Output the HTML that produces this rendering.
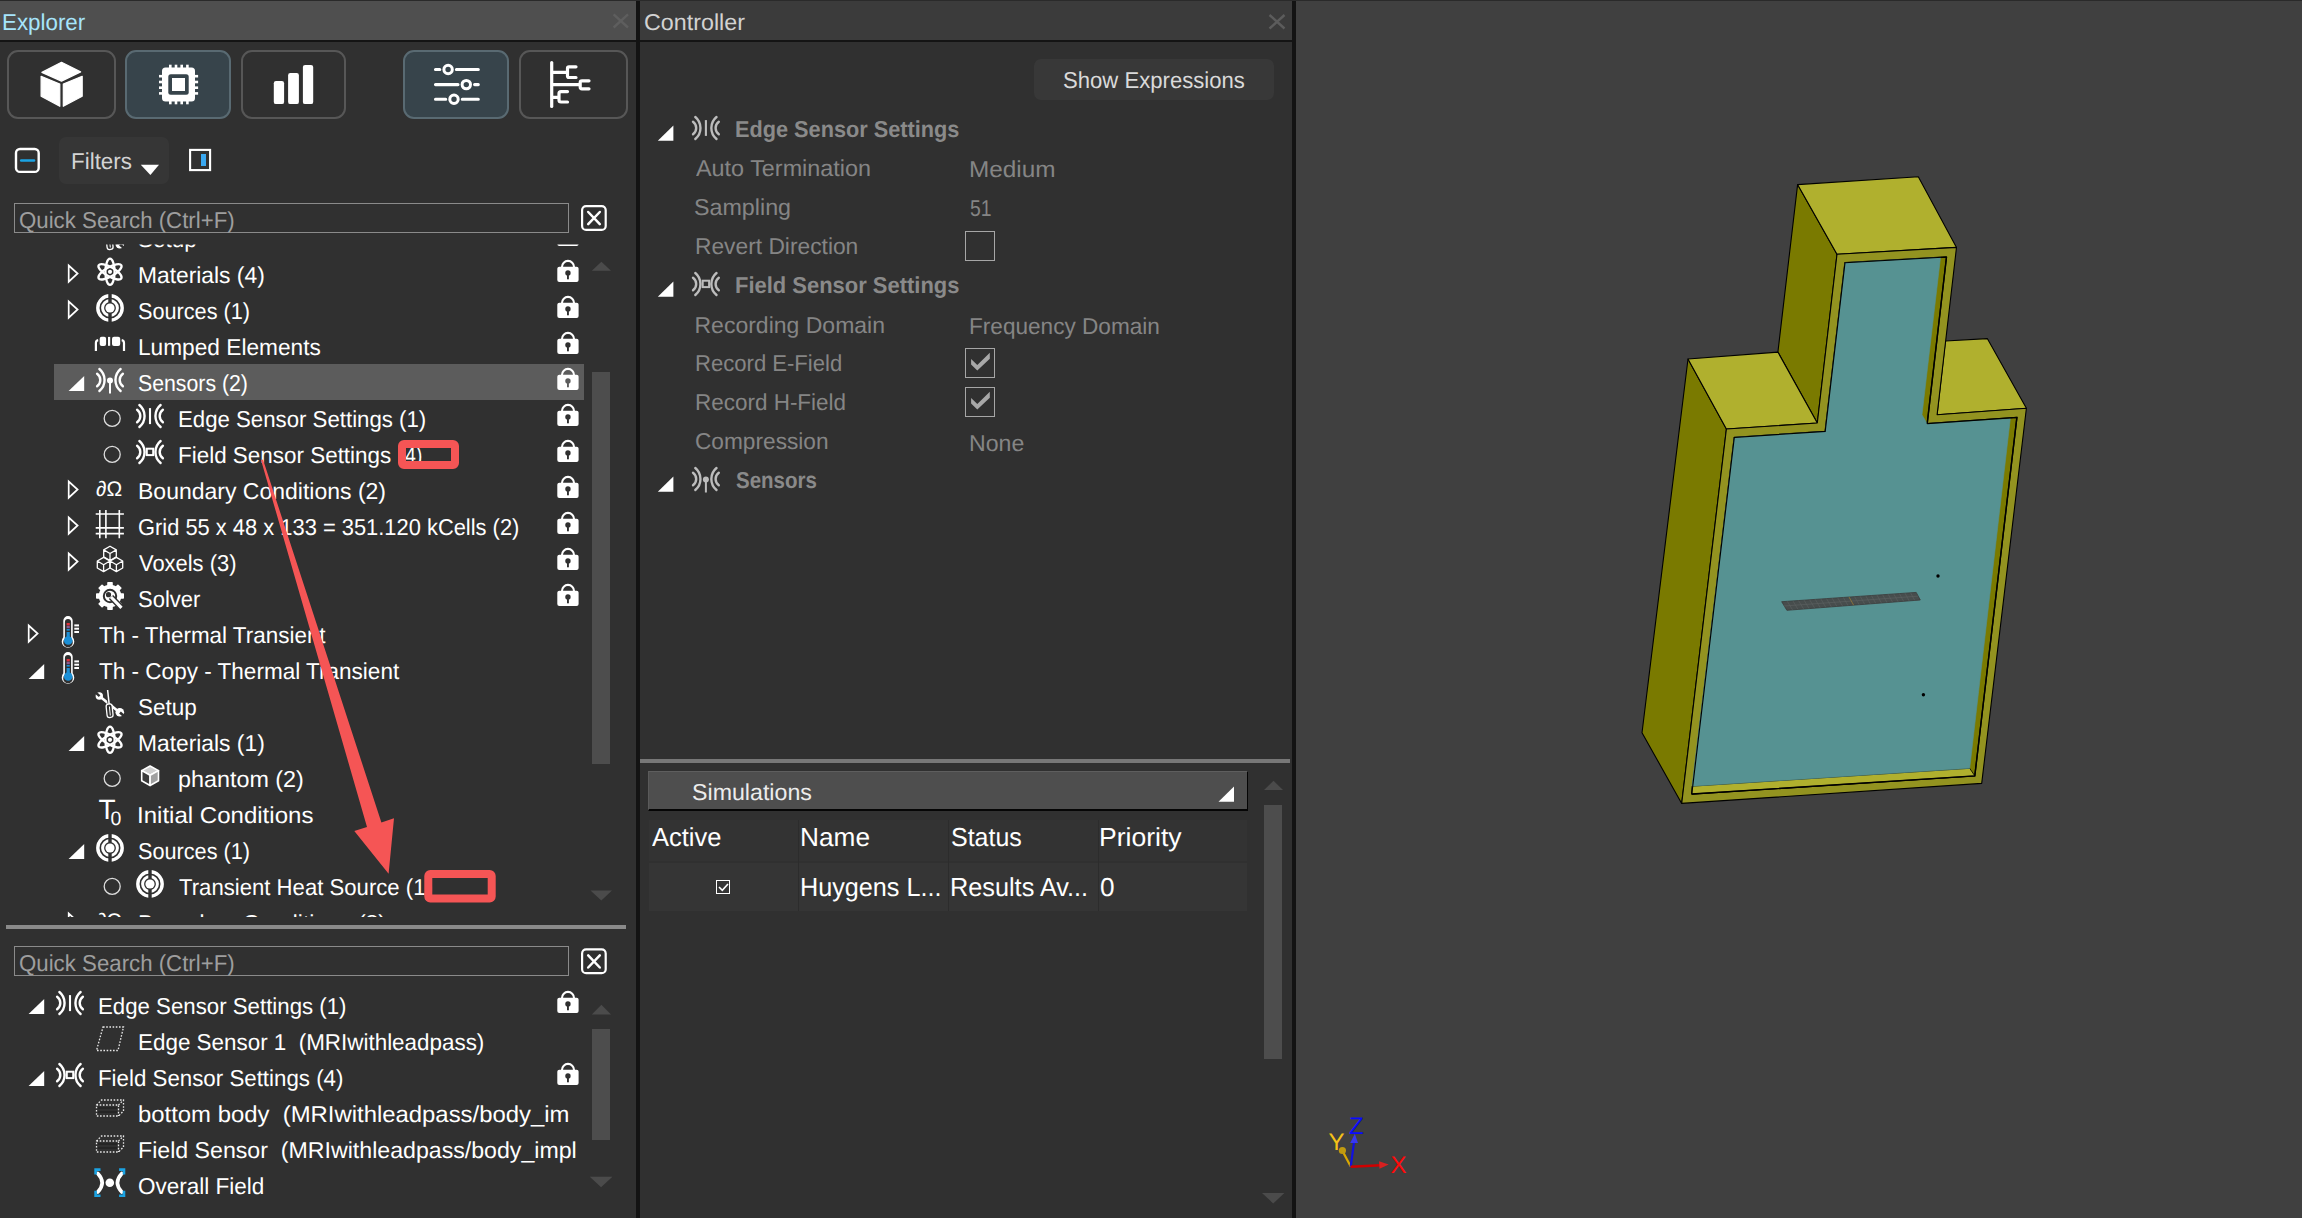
<!DOCTYPE html>
<html><head><meta charset="utf-8"><style>
html,body{margin:0;padding:0;width:2302px;height:1218px;overflow:hidden;background:#303030;}
body{position:relative;font-family:'Liberation Sans', sans-serif;}
.a{position:absolute;box-sizing:border-box;}
.t{position:absolute;white-space:pre;line-height:0;transform-origin:0 0;font-family:'Liberation Sans', sans-serif;text-rendering:geometricPrecision;}
svg{position:absolute;overflow:visible;}
</style></head><body>
<!-- top strip -->
<div class="a" style="left:0;top:0;width:2302px;height:1px;background:#2a2a2a"></div>
<!-- Explorer title -->
<div class="a" style="left:0;top:1px;width:636px;height:39px;background:#4f4f4f"></div>
<div class="a" style="left:0;top:40px;width:636px;height:2px;background:#141414"></div>
<!-- divider -->
<div class="a" style="left:636px;top:1px;width:4px;height:1217px;background:#131313"></div>
<!-- Controller title -->
<div class="a" style="left:640px;top:1px;width:652px;height:39px;background:#3b3b3b"></div>
<div class="a" style="left:640px;top:40px;width:652px;height:2px;background:#141414"></div>
<div class="a" style="left:1292px;top:1px;width:4px;height:1217px;background:#131313"></div>
<!-- viewport -->
<div class="a" style="left:1296px;top:1px;width:1006px;height:1217px;background:#404040"></div>
<!-- toolbar buttons -->
<div class="a" style="left:7px;top:50px;width:109px;height:69px;border:2px solid #575757;border-radius:11px;"></div>
<div class="a" style="left:125px;top:50px;width:106px;height:69px;border:2px solid #596a72;border-radius:11px;background:#37444b"></div>
<div class="a" style="left:241px;top:50px;width:105px;height:69px;border:2px solid #575757;border-radius:11px;"></div>
<div class="a" style="left:403px;top:50px;width:106px;height:69px;border:2px solid #596a72;border-radius:11px;background:#37444b"></div>
<div class="a" style="left:519px;top:50px;width:109px;height:69px;border:2px solid #575757;border-radius:11px;"></div>
<!-- filters row -->
<div class="a" style="left:59px;top:137px;width:110px;height:47px;background:#363636;border-radius:7px"></div>
<!-- search boxes -->
<div class="a" style="left:14px;top:203px;width:555px;height:30px;border:1px solid #8a8a8a;"></div>
<div class="a" style="left:14px;top:946px;width:555px;height:30px;border:1px solid #8a8a8a;"></div>
<!-- selection highlight -->
<div class="a" style="left:54px;top:364px;width:530px;height:36px;background:#5c5c5c"></div>
<!-- tree scrollbars -->
<div class="a" style="left:592px;top:372px;width:18px;height:392px;background:#4d4d4d"></div>
<div class="a" style="left:592px;top:1029px;width:18px;height:111px;background:#4d4d4d"></div>
<!-- splitter -->
<div class="a" style="left:6px;top:925px;width:620px;height:4px;background:#8a8a8a"></div>
<!-- Show Expressions -->
<div class="a" style="left:1034px;top:59px;width:240px;height:41px;background:#383838;border-radius:7px"></div>
<!-- controller checkboxes -->
<div class="a" style="left:965px;top:231px;width:30px;height:30px;border:1.3px solid #a6a6a6;"></div>
<div class="a" style="left:965px;top:348px;width:30px;height:30px;border:1.3px solid #a6a6a6;"></div>
<div class="a" style="left:965px;top:387px;width:30px;height:30px;border:1.3px solid #a6a6a6;"></div>
<!-- splitter ctrl -->
<div class="a" style="left:640px;top:759px;width:650px;height:4px;background:#777"></div>
<!-- simulations header -->
<div class="a" style="left:648px;top:771px;width:600px;height:40px;background:#4e4e4e;border-top:1px solid #5e5e5e;border-left:1px solid #5a5a5a;border-bottom:2px solid #050505;border-right:1px solid #050505"></div>
<div class="a" style="left:649px;top:820px;width:598px;height:41px;background:#333"></div>
<div class="a" style="left:649px;top:863px;width:598px;height:48px;background:#353535"></div>
<div class="a" style="left:798px;top:820px;width:1px;height:91px;background:#2c2c2c"></div>
<div class="a" style="left:948px;top:820px;width:1px;height:91px;background:#2c2c2c"></div>
<div class="a" style="left:1098px;top:820px;width:1px;height:91px;background:#2c2c2c"></div>
<div class="a" style="left:716px;top:880px;width:14px;height:14px;border:1px solid #fff;"></div>
<!-- sim scrollbar -->
<div class="a" style="left:1264px;top:805px;width:18px;height:254px;background:#4d4d4d"></div>

<div class="a" id="tree1" style="left:0;top:0;width:590px;height:1218px;clip-path:inset(244.5px 0 301px 0);"><div class="a" style="left:0;top:0;width:590px;height:1218px;">
<div class="t" style="left:138.02px;top:238.95px;font-size:23px;color:#fff;transform:scaleX(0.9775);">Setup</div><div class="t" style="left:138.01px;top:274.95px;font-size:23px;color:#fff;transform:scaleX(0.9917);">Materials (4)</div><div class="t" style="left:138.06px;top:310.95px;font-size:23px;color:#fff;transform:scaleX(0.9419);">Sources (1)</div><div class="t" style="left:138.01px;top:346.95px;font-size:23px;color:#fff;transform:scaleX(0.9860);">Lumped Elements</div><div class="t" style="left:138.08px;top:382.95px;font-size:23px;color:#fff;transform:scaleX(0.9248);">Sensors (2)</div><div class="t" style="left:177.83px;top:418.95px;font-size:23px;color:#fff;transform:scaleX(0.9659);">Edge Sensor Settings (1)</div><div class="t" style="left:177.82px;top:454.95px;font-size:23px;color:#fff;transform:scaleX(0.9755);">Field Sensor Settings</div><div class="t" style="left:138.00px;top:490.95px;font-size:23px;color:#fff;">Boundary Conditions (2)</div><div class="t" style="left:138.05px;top:526.95px;font-size:23px;color:#fff;transform:scaleX(0.9515);">Grid 55 x 48 x 133 = 351.120 kCells (2)</div><div class="t" style="left:139.00px;top:562.95px;font-size:23px;color:#fff;transform:scaleX(0.9527);">Voxels (3)</div><div class="t" style="left:138.04px;top:598.95px;font-size:23px;color:#fff;transform:scaleX(0.9561);">Solver</div><div class="t" style="left:98.70px;top:634.95px;font-size:23px;color:#fff;transform:scaleX(0.9758);">Th - Thermal Transient</div><div class="t" style="left:98.70px;top:670.95px;font-size:23px;color:#fff;transform:scaleX(0.9799);">Th - Copy - Thermal Transient</div><div class="t" style="left:138.02px;top:706.95px;font-size:23px;color:#fff;transform:scaleX(0.9775);">Setup</div><div class="t" style="left:138.01px;top:742.95px;font-size:23px;color:#fff;transform:scaleX(0.9917);">Materials (1)</div><div class="t" style="left:177.78px;top:778.95px;font-size:23px;color:#fff;transform:scaleX(1.0151);">phantom (2)</div><div class="t" style="left:136.91px;top:814.95px;font-size:23px;color:#fff;transform:scaleX(1.0453);">Initial Conditions</div><div class="t" style="left:138.06px;top:850.95px;font-size:23px;color:#fff;transform:scaleX(0.9419);">Sources (1)</div><div class="t" style="left:178.80px;top:886.95px;font-size:23px;color:#fff;transform:scaleX(0.9624);">Transient Heat Source (1)</div><div class="t" style="left:138.00px;top:922.95px;font-size:23px;color:#fff;">Boundary Conditions (2)</div><div class="t" style="left:398.67px;top:454.95px;font-size:23px;color:#fff;transform:scaleX(0.8280);">(4)</div>
</div></div>
<div class="a" id="tree2" style="left:0;top:980px;width:578px;height:238px;overflow:hidden;"><div class="a" style="left:0;top:-980px;width:590px;height:1218px;">
<div class="t" style="left:97.73px;top:1005.95px;font-size:23px;color:#fff;transform:scaleX(0.9670);">Edge Sensor Settings (1)</div><div class="t" style="left:138.03px;top:1041.95px;font-size:23px;color:#fff;transform:scaleX(0.9745);">Edge Sensor 1  (MRIwithleadpass)</div><div class="t" style="left:97.73px;top:1077.95px;font-size:23px;color:#fff;transform:scaleX(0.9696);">Field Sensor Settings (4)</div><div class="t" style="left:137.96px;top:1113.95px;font-size:23px;color:#fff;transform:scaleX(1.0384);">bottom body  (MRIwithleadpass/body_im</div><div class="t" style="left:137.99px;top:1149.95px;font-size:23px;color:#fff;transform:scaleX(1.0065);">Field Sensor  (MRIwithleadpass/body_impl</div><div class="t" style="left:138.02px;top:1185.95px;font-size:23px;color:#fff;transform:scaleX(0.9788);">Overall Field</div>
</div></div>
<div class="t" style="left:2.43px;top:21.95px;font-size:23px;color:#a6e4fb;transform:scaleX(0.9719);">Explorer</div><div class="t" style="left:643.69px;top:21.95px;font-size:23px;color:#d2d2d2;transform:scaleX(1.0127);">Controller</div><div class="t" style="left:70.73px;top:160.65px;font-size:23px;color:#d4d4d4;transform:scaleX(0.9737);">Filters</div><div class="t" style="left:19.33px;top:220.45px;font-size:23px;color:#9e9e9e;transform:scaleX(0.9672);">Quick Search (Ctrl+F)</div><div class="t" style="left:19.33px;top:963.45px;font-size:23px;color:#9e9e9e;transform:scaleX(0.9672);">Quick Search (Ctrl+F)</div><div class="t" style="left:1062.64px;top:79.85px;font-size:23px;color:#dadada;transform:scaleX(0.9611);">Show Expressions</div><div class="t" style="left:735.26px;top:128.75px;font-size:23px;color:#8a8a8a;font-weight:bold;transform:scaleX(0.9439);">Edge Sensor Settings</div><div class="t" style="left:695.50px;top:167.95px;font-size:23px;color:#858585;transform:scaleX(1.0163);">Auto Termination</div><div class="t" style="left:968.94px;top:169.45px;font-size:23px;color:#858585;transform:scaleX(1.0585);">Medium</div><div class="t" style="left:694.49px;top:207.35px;font-size:23px;color:#858585;transform:scaleX(1.0118);">Sampling</div><div class="t" style="left:970.00px;top:208.45px;font-size:23px;color:#858585;transform:scaleX(0.8430);">51</div><div class="t" style="left:694.51px;top:245.95px;font-size:23px;color:#858585;transform:scaleX(0.9902);">Revert Direction</div><div class="t" style="left:735.25px;top:284.95px;font-size:23px;color:#8a8a8a;font-weight:bold;transform:scaleX(0.9543);">Field Sensor Settings</div><div class="t" style="left:694.50px;top:324.95px;font-size:23px;color:#858585;">Recording Domain</div><div class="t" style="left:969.02px;top:326.35px;font-size:23px;color:#858585;transform:scaleX(0.9822);">Frequency Domain</div><div class="t" style="left:694.54px;top:362.95px;font-size:23px;color:#858585;transform:scaleX(0.9598);">Record E-Field</div><div class="t" style="left:694.52px;top:401.95px;font-size:23px;color:#858585;transform:scaleX(0.9767);">Record H-Field</div><div class="t" style="left:694.51px;top:441.35px;font-size:23px;color:#858585;transform:scaleX(0.9858);">Compression</div><div class="t" style="left:968.99px;top:442.75px;font-size:23px;color:#858585;transform:scaleX(1.0058);">None</div><div class="t" style="left:736.20px;top:479.95px;font-size:23px;color:#8a8a8a;font-weight:bold;transform:scaleX(0.8903);">Sensors</div><div class="t" style="left:691.59px;top:791.95px;font-size:23px;color:#ececec;transform:scaleX(1.0086);">Simulations</div><div class="t" style="left:651.80px;top:836.90px;font-size:26px;color:#fff;transform:scaleX(0.9809);">Active</div><div class="t" style="left:799.68px;top:836.90px;font-size:26px;color:#fff;transform:scaleX(1.0091);">Name</div><div class="t" style="left:950.64px;top:836.90px;font-size:26px;color:#fff;transform:scaleX(0.9600);">Status</div><div class="t" style="left:1099.46px;top:836.90px;font-size:26px;color:#fff;transform:scaleX(1.0216);">Priority</div><div class="t" style="left:799.76px;top:886.90px;font-size:26px;color:#fff;transform:scaleX(0.9693);">Huygens L...</div><div class="t" style="left:949.66px;top:886.90px;font-size:26px;color:#fff;transform:scaleX(0.9719);">Results Av...</div><div class="t" style="left:1100.49px;top:886.90px;font-size:26px;color:#fff;transform:scaleX(1.0077);">0</div>
<svg style="left:0;top:0" width="2302" height="1218" viewBox="0 0 2302 1218">
<defs>
<clipPath id="c1"><rect x="0" y="244.5" width="590" height="672.5"/></clipPath>
<clipPath id="c2"><rect x="0" y="980" width="590" height="238"/></clipPath>
<path id="trio" d="M1,2 L1,18.2 L9.9,10 Z" fill="none" stroke="#ffffff" stroke-width="1.7" stroke-linejoin="miter"/>
<path id="trif" d="M0,15.2 L15.6,15.2 L15.6,0 Z" fill="#ffffff"/>
<g id="lock"><rect x="0" y="10.7" width="21.3" height="15.2" rx="2" fill="#ffffff"/><path d="M4.7,11.5 L4.7,10.9 A6,6 0 0 1 16.7,10.9 L16.7,11.5" fill="none" stroke="#ffffff" stroke-width="2.1"/><circle cx="10.65" cy="16.9" r="2.7" fill="#303030"/><rect x="9.7" y="17" width="1.9" height="6.3" fill="#303030"/></g>
<g id="lockh"><rect x="0" y="10.7" width="21.3" height="15.2" rx="2" fill="#ffffff"/><path d="M4.7,11.5 L4.7,10.9 A6,6 0 0 1 16.7,10.9 L16.7,11.5" fill="none" stroke="#ffffff" stroke-width="2.1"/><circle cx="10.65" cy="16.9" r="2.7" fill="#5c5c5c"/><rect x="9.7" y="17" width="1.9" height="6.3" fill="#5c5c5c"/></g>
<circle id="radio" cx="0" cy="0" r="8" fill="none" stroke="#dcdcdc" stroke-width="1.3"/>
<g id="src"><circle r="12.2" fill="none" stroke="#ffffff" stroke-width="3.4"/><circle r="7.4" fill="none" stroke="#ffffff" stroke-width="3"/><rect x="-1.7" y="-15" width="3.4" height="30" fill="#303030"/><circle r="4.6" fill="#ffffff"/></g>
<g id="atom" fill="none" stroke="#ffffff" stroke-width="2.3"><ellipse rx="4.6" ry="13.1"/><ellipse rx="4.6" ry="13.1" transform="rotate(60)"/><ellipse rx="4.6" ry="13.1" transform="rotate(-60)"/><circle r="2.1" fill="#ffffff" stroke="none"/></g>
<g id="lumped"><path d="M95.9,350.9 L95.9,343 Q95.9,340.6 98.2,340.2 M124,350.9 L124,343 Q124,340.6 121.7,340.2" fill="none" stroke="#ffffff" stroke-width="2.2" transform="translate(0,-328)"/><rect x="99.7" y="8.7" width="6.4" height="9.3" rx="2" fill="#ffffff"/><rect x="108" y="8.9" width="2.2" height="8.9" fill="#ffffff"/><rect x="112" y="8.7" width="8.2" height="9.3" rx="2" fill="#ffffff"/></g>
<g id="edge"><path d="M-10.6,-11 A14.3,14.3 0 0 1 -10.6,11 M-12.9,-6.3 A7.8,7.8 0 0 1 -12.9,6.3 M10.6,-11 A14.3,14.3 0 0 0 10.6,11 M12.9,-6.3 A7.8,7.8 0 0 0 12.9,6.3" fill="none" stroke="#ffffff" stroke-width="2.4" stroke-linecap="round"/><rect x="-1.05" y="-7.9" width="2.1" height="16" fill="#ffffff"/></g>
<g id="field"><path d="M-10.6,-11 A14.3,14.3 0 0 1 -10.6,11 M-12.9,-6.3 A7.8,7.8 0 0 1 -12.9,6.3 M10.6,-11 A14.3,14.3 0 0 0 10.6,11 M12.9,-6.3 A7.8,7.8 0 0 0 12.9,6.3" fill="none" stroke="#ffffff" stroke-width="2.4" stroke-linecap="round"/><rect x="-3.2" y="-3.3" width="6.4" height="6.4" fill="none" stroke="#ffffff" stroke-width="2"/></g>
<g id="sensors"><path d="M-10.6,-11 A14.3,14.3 0 0 1 -10.6,11 M-12.9,-6.3 A7.8,7.8 0 0 1 -12.9,6.3 M10.6,-11 A14.3,14.3 0 0 0 10.6,11 M12.9,-6.3 A7.8,7.8 0 0 0 12.9,6.3" fill="none" stroke="#ffffff" stroke-width="2.4" stroke-linecap="round"/><circle cx="0" cy="0.5" r="3" fill="#ffffff"/><rect x="-1" y="1" width="2" height="12.5" fill="#ffffff"/></g>
<g id="edgeg"><path d="M-10.6,-11 A14.3,14.3 0 0 1 -10.6,11 M-12.9,-6.3 A7.8,7.8 0 0 1 -12.9,6.3 M10.6,-11 A14.3,14.3 0 0 0 10.6,11 M12.9,-6.3 A7.8,7.8 0 0 0 12.9,6.3" fill="none" stroke="#bdbdbd" stroke-width="2.4" stroke-linecap="round"/><rect x="-1.05" y="-7.9" width="2.1" height="15.8" fill="#bdbdbd"/></g>
<g id="fieldg"><path d="M-10.6,-11 A14.3,14.3 0 0 1 -10.6,11 M-12.9,-6.3 A7.8,7.8 0 0 1 -12.9,6.3 M10.6,-11 A14.3,14.3 0 0 0 10.6,11 M12.9,-6.3 A7.8,7.8 0 0 0 12.9,6.3" fill="none" stroke="#bdbdbd" stroke-width="2.4" stroke-linecap="round"/><rect x="-3.2" y="-3.3" width="6.4" height="6.4" fill="none" stroke="#bdbdbd" stroke-width="2"/></g>
<g id="sensorsg"><path d="M-10.6,-11 A14.3,14.3 0 0 1 -10.6,11 M-12.9,-6.3 A7.8,7.8 0 0 1 -12.9,6.3 M10.6,-11 A14.3,14.3 0 0 0 10.6,11 M12.9,-6.3 A7.8,7.8 0 0 0 12.9,6.3" fill="none" stroke="#bdbdbd" stroke-width="2.4" stroke-linecap="round"/><circle cx="0" cy="0.5" r="3" fill="#bdbdbd"/><rect x="-1" y="1" width="2" height="12.5" fill="#bdbdbd"/></g>
<g id="grid" stroke="#ffffff" stroke-width="1.6" fill="none"><path d="M99.8,2 V30.2 M105.9,2 V30.2 M119.3,2 V30.2 M95.7,6 H123.9 M95.7,19.9 H123.9 M95.7,25.6 H123.9"/></g>
<g id="voxels" stroke="#ffffff" stroke-width="1.3" fill="none" stroke-linejoin="round"><path d="M110,2.2 L116.3,5.853999999999999 L116.3,12.783999999999999 L110,16.438 L103.7,12.783999999999999 L103.7,5.853999999999999 Z M103.7,5.853999999999999 L110,9.508 L116.3,5.853999999999999 M110,9.508 L110,16.438"/><path d="M103.6,13.4 L109.89999999999999,17.054 L109.89999999999999,23.983999999999998 L103.6,27.637999999999998 L97.3,23.983999999999998 L97.3,17.054 Z M97.3,17.054 L103.6,20.708 L109.89999999999999,17.054 M103.6,20.708 L103.6,27.637999999999998"/><path d="M116.4,13.4 L122.7,17.054 L122.7,23.983999999999998 L116.4,27.637999999999998 L110.10000000000001,23.983999999999998 L110.10000000000001,17.054 Z M110.10000000000001,17.054 L116.4,20.708 L122.7,17.054 M116.4,20.708 L116.4,27.637999999999998"/></g>
<g id="solver"><g fill="#ffffff"><rect x="-2.8" y="-14" width="5.6" height="5" rx="0.8" transform="rotate(0)"/><rect x="-2.8" y="-14" width="5.6" height="5" rx="0.8" transform="rotate(45)"/><rect x="-2.8" y="-14" width="5.6" height="5" rx="0.8" transform="rotate(90)"/><rect x="-2.8" y="-14" width="5.6" height="5" rx="0.8" transform="rotate(135)"/><rect x="-2.8" y="-14" width="5.6" height="5" rx="0.8" transform="rotate(180)"/><rect x="-2.8" y="-14" width="5.6" height="5" rx="0.8" transform="rotate(225)"/><rect x="-2.8" y="-14" width="5.6" height="5" rx="0.8" transform="rotate(270)"/><rect x="-2.8" y="-14" width="5.6" height="5" rx="0.8" transform="rotate(315)"/><circle r="11.3"/></g><circle r="6.2" fill="none" stroke="#303030" stroke-width="2"/><path d="M1,1 L11.5,11.8" stroke="#303030" stroke-width="6" /><path d="M1,1 L11.5,11.8" stroke="#ffffff" stroke-width="3.2" stroke-linecap="butt"/><circle cx="-1.5" cy="-1.3" r="2.6" fill="#303030"/></g>
<g id="therm"><path d="M63.3,3.5 A4.7,4.7 0 0 1 72.7,3.5 L72.7,20 A6.3,6.3 0 1 1 63.3,20 Z" transform="translate(0,1.3)" fill="#ffffff"/><path d="M64.9,4.8 A3.1,3.1 0 0 1 71.1,4.8 L71.1,21.5 A4.8,4.8 0 1 1 64.9,21.5 Z" fill="#303030" transform="translate(0,1.3)"/><rect x="66.6" y="7" width="3.2" height="2.4" fill="#e0303a"/><rect x="66.6" y="9.8" width="3.2" height="2.4" fill="#8a5a90"/><rect x="66.6" y="13" width="3.2" height="1.6" fill="#1b8fd6"/><rect x="66.6" y="16" width="3.2" height="10" fill="#1b8fd6"/><circle cx="68.2" cy="24.5" r="4.3" fill="#1b8fd6"/><rect x="74.3" y="8.4" width="4.7" height="2" fill="#ffffff"/><rect x="74.3" y="11.7" width="4.7" height="2" fill="#ffffff"/><rect x="74.3" y="15" width="4.7" height="2" fill="#ffffff"/></g>
<g id="setup"><path d="M100.5,9 L118.5,23.5" stroke="#ffffff" stroke-width="2.6"/><circle cx="99.3" cy="8" r="3.7" fill="#ffffff"/><path d="M95.5,4.5 L99.6,8.2" stroke="#303030" stroke-width="2.4"/><circle cx="119.8" cy="24.3" r="4.3" fill="#ffffff"/><path d="M124.5,28.5 L120,24.5" stroke="#303030" stroke-width="2.6"/><path d="M107.6,2 L109.2,16.5" stroke="#303030" stroke-width="3.2"/><path d="M107.6,2 L109.2,16.5" stroke="#ffffff" stroke-width="1.5"/><rect x="106.6" y="16" width="6" height="13.5" rx="2.5" fill="#303030" stroke="#ffffff" stroke-width="1.3" transform="rotate(-6 109.6 22.7)"/><path d="M109.4,18.5 L110.3,27.5" stroke="#ffffff" stroke-width="1"/></g>
<g id="pcube" stroke="#ffffff" stroke-width="1.6" stroke-linejoin="round"><path d="M0,0 L8.4,4.6 L0,9.3 L-8.4,4.6 Z" fill="#cfcfcf"/><path d="M-8.4,4.6 L0,9.3 L0,19.5 L-8.4,14.8 Z" fill="#3a3a3a"/><path d="M8.4,4.6 L0,9.3 L0,19.5 L8.4,14.8 Z" fill="#a0a0a0"/></g>
</defs>
<g fill="#ffffff" stroke="#ffffff" stroke-width="1.2" stroke-linejoin="round"><path d="M61.5,62.3 L80.6,71.9 L61.5,81.1 L41.9,72.4 Z"/><path d="M41.1,76.3 L59.8,84.1 L59.8,106.3 L41.1,96.3 Z"/><path d="M63.3,84.1 L82.2,76.3 L82.2,96.3 L63.3,106.3 Z"/></g>
<g fill="#ffffff"><rect x="169" y="64.7" width="2.6" height="3.5"/><rect x="169" y="100.9" width="2.6" height="3.4"/><rect x="174.7" y="64.7" width="2.6" height="3.5"/><rect x="174.7" y="100.9" width="2.6" height="3.4"/><rect x="180.4" y="64.7" width="2.6" height="3.5"/><rect x="180.4" y="100.9" width="2.6" height="3.4"/><rect x="186.1" y="64.7" width="2.6" height="3.5"/><rect x="186.1" y="100.9" width="2.6" height="3.4"/><rect x="159" y="74.9" width="3.5" height="2.6"/><rect x="194.6" y="74.9" width="3.5" height="2.6"/><rect x="159" y="80.7" width="3.5" height="2.6"/><rect x="194.6" y="80.7" width="3.5" height="2.6"/><rect x="159" y="86.4" width="3.5" height="2.6"/><rect x="194.6" y="86.4" width="3.5" height="2.6"/><rect x="159" y="92.1" width="3.5" height="2.6"/><rect x="194.6" y="92.1" width="3.5" height="2.6"/><rect x="162" y="67.6" width="33" height="33.9" rx="3.5"/></g><rect x="168.3" y="74.3" width="20.4" height="20.4" rx="2.5" fill="#37444b"/><rect x="172" y="78" width="13" height="13" fill="#ffffff"/>
<g fill="#ffffff"><rect x="273.8" y="81.1" width="10.3" height="23" rx="2.2"/><rect x="288.1" y="73" width="10.8" height="31.1" rx="2.2"/><rect x="302.9" y="64.9" width="10.3" height="39.2" rx="2.2"/></g>
<path d="M435.5,69.5 H439.8 M456.40000000000003,69.5 H478.3" stroke="#ffffff" stroke-width="3.1" stroke-linecap="round"/><circle cx="448.1" cy="69.5" r="4.2" fill="none" stroke="#ffffff" stroke-width="3"/><path d="M435.5,84.6 H458.0 M474.6,84.6 H478.3" stroke="#ffffff" stroke-width="3.1" stroke-linecap="round"/><circle cx="466.3" cy="84.6" r="4.2" fill="none" stroke="#ffffff" stroke-width="3"/><path d="M435.5,99.3 H445.7 M462.3,99.3 H478.3" stroke="#ffffff" stroke-width="3.1" stroke-linecap="round"/><circle cx="454" cy="99.3" r="4.2" fill="none" stroke="#ffffff" stroke-width="3"/>
<g fill="none" stroke="#ffffff" stroke-width="3.2" stroke-linecap="round" stroke-linejoin="round"><path d="M551.7,62.6 V106.5"/><path d="M553,72.4 H567.5 M576,66.8 H569 Q567.5,66.8 567.5,68.3 V76 Q567.5,77.5 569,77.5 H576"/><path d="M553,84.6 H580.2 M589,80.8 H582 Q580.2,80.8 580.2,82.6 V87 Q580.2,88.8 582,88.8 H589"/><path d="M553,97.3 H559 M567.5,91.6 H561 Q559,91.6 559,93.5 V100 Q559,102 561,102 H567.5"/></g>
<rect x="16" y="149" width="22.7" height="22.9" rx="4" fill="none" stroke="#ffffff" stroke-width="2.4"/>
<path d="M21.2,160.5 H34" stroke="#1ba3e3" stroke-width="2.6" stroke-linecap="round"/>
<path d="M140.8,164.7 H159 L150.4,175.1 Z" fill="#ffffff"/>
<rect x="190.1" y="149.9" width="20" height="20.2" fill="none" stroke="#ffffff" stroke-width="2.1"/>
<rect x="201" y="154" width="5" height="12" fill="#3aa8f0"/>
<rect x="582.1" y="206.1" width="23.6" height="23.8" rx="4" fill="none" stroke="#ffffff" stroke-width="2.2"/>
<path d="M588.2,212 L599.8,224.2 M599.8,212 L588.2,224.2" stroke="#ffffff" stroke-width="2.5" stroke-linecap="round"/>
<rect x="582.1" y="949.4" width="23.6" height="23.8" rx="4" fill="none" stroke="#ffffff" stroke-width="2.2"/>
<path d="M588.2,955.3 L599.8,967.5 M599.8,955.3 L588.2,967.5" stroke="#ffffff" stroke-width="2.5" stroke-linecap="round"/>
<path d="M613.6,14.3 L628,27.5 M628,14.3 L613.6,27.5" stroke="#5e5e5e" stroke-width="2.4"/>
<path d="M1269.5,15 L1284.5,28.5 M1284.5,15 L1269.5,28.5" stroke="#5c5c5c" stroke-width="2.4"/>
<g clip-path="url(#c1)">
<use href="#setup" x="0" y="220" />
<use href="#lock" x="557.3" y="220" />
<use href="#trio" x="67.7" y="263.5" />
<use href="#atom" x="110" y="271.8" />
<use href="#lock" x="557.3" y="256" />
<use href="#trio" x="67.7" y="299.5" />
<use href="#src" x="110" y="308" />
<use href="#lock" x="557.3" y="292" />
<use href="#lumped" x="0" y="328" />
<use href="#lock" x="557.3" y="328" />
<use href="#trif" x="68.6" y="375.9" />
<use href="#sensors" x="110" y="380" />
<use href="#lockh" x="557.3" y="364" />
<use href="#radio" x="112.2" y="418.4"/>
<use href="#edge" x="150" y="416" />
<use href="#lock" x="557.3" y="400" />
<use href="#radio" x="112.2" y="454.4"/>
<use href="#field" x="150" y="452" />
<use href="#lock" x="557.3" y="436" />
<use href="#trio" x="67.7" y="479.5" />
<text x="96" y="495.7" font-family="Liberation Sans" font-size="21" fill="#ffffff" text-rendering="geometricPrecision">∂Ω</text>
<use href="#lock" x="557.3" y="472" />
<use href="#trio" x="67.7" y="515.5" />
<use href="#grid" x="0" y="508" />
<use href="#lock" x="557.3" y="508" />
<use href="#trio" x="67.7" y="551.5" />
<use href="#voxels" x="0" y="544" />
<use href="#lock" x="557.3" y="544" />
<use href="#solver" x="110" y="596" />
<use href="#lock" x="557.3" y="580" />
<use href="#trio" x="27.700000000000003" y="623.5" />
<use href="#therm" x="0" y="616" />
<use href="#trif" x="28.599999999999994" y="663.9" />
<use href="#therm" x="0" y="652" />
<use href="#setup" x="0" y="688" />
<use href="#trif" x="68.6" y="735.9" />
<use href="#atom" x="110" y="739.8" />
<use href="#radio" x="112.2" y="778.4"/>
<use href="#pcube" x="150.1" y="766" />
<text x="98.5" y="819" font-family="Liberation Sans" font-size="28" fill="#ffffff" text-rendering="geometricPrecision">T</text>
<text x="110.5" y="825.2" font-family="Liberation Sans" font-size="19.5" fill="#ffffff" text-rendering="geometricPrecision">0</text>
<use href="#trif" x="68.6" y="843.9" />
<use href="#src" x="110" y="848" />
<use href="#radio" x="112.2" y="886.4"/>
<use href="#src" x="150" y="884" />
<use href="#trio" x="67.7" y="911.5" />
<text x="96" y="927.7" font-family="Liberation Sans" font-size="21" fill="#ffffff" text-rendering="geometricPrecision">∂Ω</text>
</g>
<g clip-path="url(#c2)">
<use href="#trif" x="28.6" y="998.9" />
<use href="#edge" x="70" y="1003" />
<use href="#lock" x="557.3" y="987" />
<use href="#trif" x="28.6" y="1070.9" />
<use href="#field" x="70" y="1075" />
<use href="#lock" x="557.3" y="1059" />
<path d="M103,1027 H123.5 L118,1050.5 H96.5 Z" fill="none" stroke="#e8e8e8" stroke-width="1.3" stroke-dasharray="1.6,1.6"/>
<g fill="none" stroke="#e8e8e8" stroke-width="1.3" stroke-dasharray="1.6,1.6"><path d="M96.5,1105 L101.5,1100 H123.5 V1111 L118.5,1116 H96.5 Z M96.5,1105 H118.5 V1116 M118.5,1105 L123.5,1100"/></g>
<path d="M98,1108 H117 M98,1112 H117" stroke="#1a1a1a" stroke-width="1"/>
<g fill="none" stroke="#e8e8e8" stroke-width="1.3" stroke-dasharray="1.6,1.6"><path d="M96.5,1141 L101.5,1136 H123.5 V1147 L118.5,1152 H96.5 Z M96.5,1141 H118.5 V1152 M118.5,1141 L123.5,1136"/></g>
<path d="M98,1144 H117 M98,1148 H117" stroke="#1a1a1a" stroke-width="1"/>
<path d="M97.8,1173.5 Q106.5,1182.7 97.8,1192 M121.8,1173.5 Q113.1,1182.7 121.8,1192" fill="none" stroke="#ffffff" stroke-width="3.6" stroke-linecap="round"/>
<circle cx="109.8" cy="1182.7" r="4.3" fill="#ffffff"/>
<path d="M95.6,1174.5 V1169.6 H100.5 M119.1,1169.6 H124 V1174.5 M95.6,1190.8 V1195.7 H100.5 M119.1,1195.7 H124 V1190.8" fill="none" stroke="#1ba3e3" stroke-width="2.6"/>
</g>
<path d="M591.8,270.8 L601.4,261.8 L611,270.8 Z" fill="#4b4b4b"/>
<path d="M590.5,890.4 L612,890.4 L601.3,900.5 Z" fill="#4b4b4b"/>
<path d="M591.8,1014.5 L601.4,1004.8 L611,1014.5 Z" fill="#4b4b4b"/>
<path d="M589.8,1176.7 L612.4,1176.7 L601.1,1187.2 Z" fill="#4b4b4b"/>
<path d="M1264,790 L1273.5,780.7 L1283,790 Z" fill="#4b4b4b"/>
<path d="M1262,1192.9 L1284.4,1192.9 L1273.2,1203.4 Z" fill="#4b4b4b"/>
<use href="#trif" x="657.8" y="125.6" />
<use href="#trif" x="657.8" y="281.6" />
<use href="#trif" x="657.8" y="476.6" />
<use href="#edgeg" x="705.9" y="128" />
<use href="#fieldg" x="705.9" y="284" />
<use href="#sensorsg" x="705.9" y="479" />
<polygon points="971.1,359.1 977.3,365.0 989.8,352.8 989.8,358.7 977.3,370.6 971.1,364.6" fill="#a8a8a8"/>
<polygon points="971.1,398.1 977.3,404.0 989.8,391.8 989.8,397.7 977.3,409.6 971.1,403.6" fill="#a8a8a8"/>
<path d="M1218.5,801.7 H1234 V786.6 Z" fill="#ffffff"/>
<path d="M719,887 L722.3,890.3 L728,884" fill="none" stroke="#ffffff" stroke-width="1.6"/>
</svg><svg style="left:0;top:0" width="2302" height="1218" viewBox="0 0 2302 1218">
<polygon points="1797.6,184.6 1837,254.3 1817.3,423 1777.9,352.1" fill="#7a7a00" stroke="#000" stroke-width="1.1" stroke-linejoin="round"/>
<polygon points="1688,359 1726.4,429 1681.7,803.4 1642,732.8" fill="#7a7a00" stroke="#000" stroke-width="1.1" stroke-linejoin="round"/>
<polygon points="1797.6,184.6 1918.3,176.7 1956.5,247.4 1837,254.3" fill="#b0b02e" stroke="#000" stroke-width="1.1" stroke-linejoin="round"/>
<polygon points="1688,359 1777.9,352.1 1817.3,423 1726.4,429" fill="#b0b02e" stroke="#000" stroke-width="1.1" stroke-linejoin="round"/>
<polygon points="1945.4,341 1987.3,338.6 2026.4,408.2 1937.1,414.8" fill="#b0b02e" stroke="#000" stroke-width="1.1" stroke-linejoin="round"/>
<polygon points="1837,254.3 1956.5,247.4 1937.1,414.8 2026.4,408.2 1981.7,783.4 1681.7,803.4 1726.4,429 1817.3,423" fill="#939320" stroke="#000" stroke-width="1.1" stroke-linejoin="round"/>
<polygon points="1845,262.7 1946.5,257 1927.2,423.7 2016.9,417.4 1974.8,775.9 1691.8,794 1734.3,437.4 1825.2,431.4" fill="#7a7a00" stroke="#000" stroke-width="1.4" stroke-linejoin="round"/>
<polygon points="1692,786.2 1969.7,768.3 1974.8,775.9 1691.8,794" fill="#b0b02e" stroke="#000" stroke-width="0.8" stroke-linejoin="round"/>
<polygon points="1845,262.7 1940.5,257.4 1922,414.8 1927.2,423.7 2010.3,418.7 1969.7,768.3 1692,786.2 1734.3,437.4 1825.2,431.4" fill="#569292" stroke="#569292" stroke-width="0.6" stroke-linejoin="round"/>
<polyline points="1691.8,794 1734.3,437.4 1825.2,431.4 1845,262.7 1946.5,257" fill="none" stroke="#000" stroke-width="1.1"/>
<polyline points="1927.2,423.7 2016.9,417.4 1974.8,775.9 1691.8,794" fill="none" stroke="#000" stroke-width="1.3"/>
<polyline points="1946.5,257 1927.2,423.7" fill="none" stroke="#000" stroke-width="1.3"/>
<polygon points="1781.7,601.7 1916.2,592.4 1920.3,600 1786.9,610.3" fill="#474d4d" stroke="#3a3a3a" stroke-width="0.8"/>
<path d="M1784,606 L1918,596.2" stroke="#5c6262" stroke-width="0.6"/>
<path d="M1787.3,601.3 L1792.5,609.9" stroke="#5c6262" stroke-width="0.6"/>
<path d="M1792.9,600.9 L1798.0,609.4" stroke="#5c6262" stroke-width="0.6"/>
<path d="M1798.5,600.5 L1803.6,609.0" stroke="#5c6262" stroke-width="0.6"/>
<path d="M1804.1,600.2 L1809.1,608.6" stroke="#5c6262" stroke-width="0.6"/>
<path d="M1809.7,599.8 L1814.7,608.2" stroke="#5c6262" stroke-width="0.6"/>
<path d="M1815.3,599.4 L1820.2,607.7" stroke="#5c6262" stroke-width="0.6"/>
<path d="M1820.9,599.0 L1825.8,607.3" stroke="#5c6262" stroke-width="0.6"/>
<path d="M1826.5,598.6 L1831.4,606.9" stroke="#5c6262" stroke-width="0.6"/>
<path d="M1832.1,598.2 L1836.9,606.4" stroke="#5c6262" stroke-width="0.6"/>
<path d="M1837.7,597.8 L1842.5,606.0" stroke="#5c6262" stroke-width="0.6"/>
<path d="M1843.3,597.4 L1848.0,605.6" stroke="#5c6262" stroke-width="0.6"/>
<path d="M1849.0,597.0 L1853.6,605.1" stroke="#b08a30" stroke-width="0.6"/>
<path d="M1854.6,596.7 L1859.2,604.7" stroke="#5c6262" stroke-width="0.6"/>
<path d="M1860.2,596.3 L1864.7,604.3" stroke="#5c6262" stroke-width="0.6"/>
<path d="M1865.8,595.9 L1870.3,603.9" stroke="#5c6262" stroke-width="0.6"/>
<path d="M1871.4,595.5 L1875.8,603.4" stroke="#5c6262" stroke-width="0.6"/>
<path d="M1877.0,595.1 L1881.4,603.0" stroke="#5c6262" stroke-width="0.6"/>
<path d="M1882.6,594.7 L1887.0,602.6" stroke="#5c6262" stroke-width="0.6"/>
<path d="M1888.2,594.3 L1892.5,602.1" stroke="#5c6262" stroke-width="0.6"/>
<path d="M1893.8,594.0 L1898.1,601.7" stroke="#5c6262" stroke-width="0.6"/>
<path d="M1899.4,593.6 L1903.6,601.3" stroke="#5c6262" stroke-width="0.6"/>
<path d="M1905.0,593.2 L1909.2,600.9" stroke="#5c6262" stroke-width="0.6"/>
<path d="M1910.6,592.8 L1914.7,600.4" stroke="#5c6262" stroke-width="0.6"/>
<circle cx="1938" cy="576" r="1.7" fill="#000"/><circle cx="1923.4" cy="694.8" r="1.7" fill="#000"/>
<path d="M1350.7,1166.5 L1342.5,1151" stroke="#d9a800" stroke-width="2.2"/>
<circle cx="1342.4" cy="1150.5" r="3.6" fill="#c09a10"/>
<path d="M1350.7,1166.7 L1354.2,1141" stroke="#1010e0" stroke-width="2.2"/>
<path d="M1350.2,1143 L1354.8,1133.7 L1358,1143 Z" fill="#3838f0"/>
<path d="M1350.7,1166.8 L1381,1165.2" stroke="#d00000" stroke-width="2.4"/>
<path d="M1379,1161.3 L1388.7,1164.6 L1379.5,1168.7 Z" fill="#d82020"/>
<text x="1349" y="1133.5" font-family="Liberation Sans" font-size="24" fill="#0a0aff" text-rendering="geometricPrecision">Z</text>
<text x="1328.5" y="1149.8" font-family="Liberation Sans" font-size="24" fill="#f5c218" text-rendering="geometricPrecision">Y</text>
<text x="1390.5" y="1172.8" font-family="Liberation Sans" font-size="24" fill="#ff0a0a" text-rendering="geometricPrecision">X</text>
<rect x="402" y="444.1" width="53" height="20.9" rx="2" fill="none" stroke="#f55555" stroke-width="8"/>
<rect x="428.3" y="874" width="63.4" height="24.4" rx="2" fill="none" stroke="#f55555" stroke-width="8"/>
<polygon points="261,460 263,459.6 381.4,822.5 394,818.3 388.6,873.8 354.3,831.1 367,826.9" fill="#f55555"/>
</svg>
</body></html>
